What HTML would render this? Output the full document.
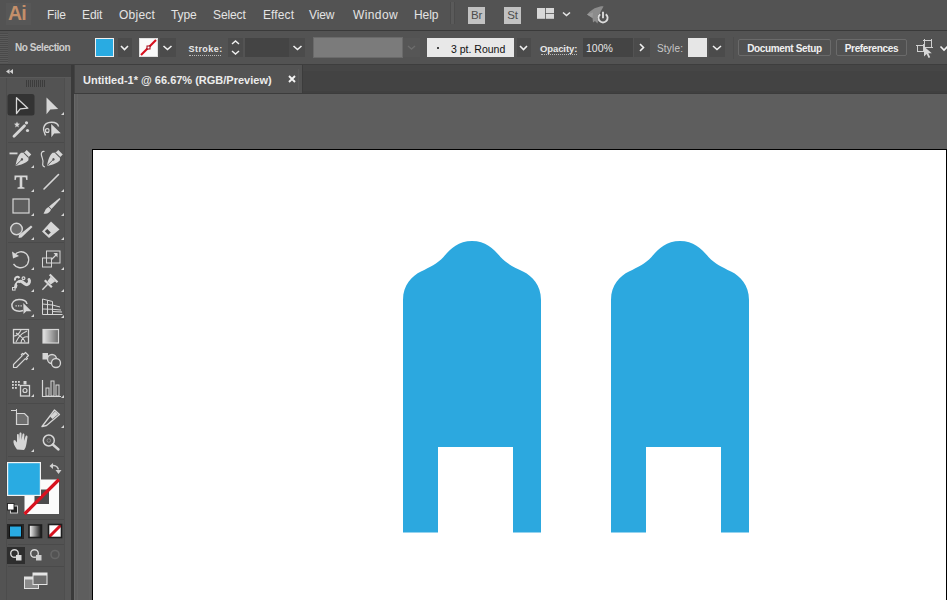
<!DOCTYPE html>
<html><head><meta charset="utf-8">
<style>
*{margin:0;padding:0;box-sizing:border-box}
html,body{width:947px;height:600px;overflow:hidden;background:#535353;font-family:"Liberation Sans",sans-serif;position:relative}
.a{position:absolute}
#menubar{left:0;top:0;width:947px;height:30px;background:#535353}
#menubar .m{position:absolute;top:8px;font-size:12px;color:#e4e4e4;letter-spacing:-0.1px}
#mline{left:0;top:30px;width:947px;height:1px;background:#3a3a3a}
#ctrl{left:0;top:31px;width:947px;height:33px;background:#535353}
#cline{left:0;top:64px;width:947px;height:1px;background:#3e3e3e}
#panel{left:0;top:65px;width:72px;height:535px;background:#535353}
#phead{left:0;top:65px;width:72px;height:12px;background:#474747}
#pborder{left:72px;top:65px;width:2px;height:535px;background:#3c3c3c}
#tabbar{left:74px;top:65px;width:873px;height:28px;background:#434343}
#tab{left:75px;top:65px;width:228px;height:28px;background:#535353;border-right:1px solid #3c3c3c}
#tabline{left:74px;top:93px;width:873px;height:1px;background:#3c3c3c}
#canvas{left:74px;top:94px;width:873px;height:506px;background:#5e5e5e}
#artboard{left:92px;top:149px;width:855px;height:470px;background:#fff;border:1px solid #000}
.btn{border:1px solid #6a6a6a;border-radius:2px;background:#515151;color:#f0f0f0;font-size:10px;font-weight:bold;text-align:center;line-height:17px;letter-spacing:-0.35px}
.lbl{position:absolute;font-size:10px;color:#e6e6e6;font-weight:bold}
</style></head><body>
<div id="menubar" class="a">
  <div class="a" style="left:6px;top:3px;width:25px;height:22px;background:#575757"></div>
  <div class="a" style="left:8px;top:2px;font-size:19.5px;font-weight:bold;color:#c48f6a;letter-spacing:-0.8px">Ai</div>
  <div class="m" style="left:47px">File</div>
  <div class="m" style="left:82px">Edit</div>
  <div class="m" style="left:119px;letter-spacing:0.25px">Object</div>
  <div class="m" style="left:171px">Type</div>
  <div class="m" style="left:213px">Select</div>
  <div class="m" style="left:263px;letter-spacing:0.1px">Effect</div>
  <div class="m" style="left:309px">View</div>
  <div class="m" style="left:353px;letter-spacing:0.4px">Window</div>
  <div class="m" style="left:414px">Help</div>
  <div class="a" style="left:450px;top:2px;width:1px;height:22px;background:#4c4c4c"></div>
  <div class="a" style="left:451px;top:2px;width:3px;height:22px;background:#5a5a5a"></div>
  <div class="a" style="left:454px;top:2px;width:1px;height:22px;background:#4c4c4c"></div>
  <div class="a ico" style="left:468px;top:7px;width:17px;height:16.5px;background:#c2c2c2;color:#4c4c4c;font-size:11.5px;font-weight:normal;line-height:17px;text-align:center;letter-spacing:-0.3px">Br</div>
  <div class="a ico" style="left:504px;top:7px;width:17px;height:16.5px;background:#c2c2c2;color:#4c4c4c;font-size:11.5px;font-weight:normal;line-height:17px;text-align:center;letter-spacing:-0.3px">St</div>
  <svg class="a" style="left:536px;top:6px" width="40" height="16"><rect x="1" y="2" width="8" height="10.8" fill="#d8d8d8"/><rect x="9.8" y="2" width="8.2" height="5.2" fill="#d8d8d8"/><rect x="9.8" y="8" width="8.2" height="4.8" fill="#d8d8d8"/><polyline points="27,6.5 30.5,9.5 34,6.5" fill="none" stroke="#e6e6e6" stroke-width="1.6"/></svg>
  <svg class="a" style="left:580px;top:0px" width="35" height="28"><path d="M7,14.5 C10,11 14,8 17,7.5 C20,6.5 22.5,6 23.5,6.5 C22,9 20.5,12 19,15 L17.5,23.5 L15,21 L13,22.5 L12.5,18 Z" fill="#8c8c8c"/><path d="M7,14.5 L13,12.5 L12.5,18 Z" fill="#9a9a9a"/><circle cx="23" cy="18.3" r="5.8" fill="#535353"/><path d="M20.2,14.2 A4.6,4.6 0 1 0 25.8,14.2" fill="none" stroke="#dcdcdc" stroke-width="1.9"/><line x1="23" y1="11.5" x2="23" y2="18.5" stroke="#535353" stroke-width="3.4"/><line x1="23" y1="11.8" x2="23" y2="18.2" stroke="#e0e0e0" stroke-width="1.8"/></svg>
</div>
<div id="mline" class="a"></div>
<div id="ctrl" class="a">
  <div class="a" style="left:0;top:2px;width:8px;height:30px;background:repeating-linear-gradient(#4a4a4a 0 1px,#5a5a5a 1px 2px)"></div>
  <div class="a" style="left:15px;top:10.5px;font-size:10px;font-weight:bold;color:#cdcdcd;letter-spacing:-0.45px">No Selection</div>
  <div class="a" style="left:95px;top:7px;width:19px;height:19px;background:#29abe2;border:1px solid #f0f0f0"></div>
  <div class="a" style="left:118px;top:7px;width:14px;height:19px;background:#4b4b4b"></div>
  <svg class="a" style="left:118px;top:7px" width="14" height="19"><polyline points="3,8 6.5,11.5 10,8" fill="none" stroke="#f0f0f0" stroke-width="1.6"/></svg>
  <div class="a" style="left:139px;top:7px;width:19px;height:19px;background:#fafafa;border:1px solid #e0e0e0"></div>
  <svg class="a" style="left:139px;top:7px" width="19" height="19"><line x1="2" y1="17" x2="17" y2="2" stroke="#d8101e" stroke-width="2.2"/><rect x="7.5" y="7.5" width="4" height="4" fill="#a00010"/><rect x="8.5" y="8.5" width="2" height="2" fill="#fff"/></svg>
  <div class="a" style="left:160px;top:7px;width:16px;height:19px;background:#4b4b4b"></div>
  <svg class="a" style="left:160px;top:7px" width="16" height="19"><polyline points="3.5,8 7.5,11.5 11.5,8" fill="none" stroke="#f0f0f0" stroke-width="1.6"/></svg>

  <div class="a" style="left:188.5px;top:12.5px;font-size:9px;font-weight:bold;color:#e8e8e8;letter-spacing:0.45px">Stroke:</div>
  <div class="a" style="left:189px;top:23.5px;width:32px;height:1px;border-top:1px dotted #bbb"></div>
  <div class="a" style="left:228px;top:7px;width:15px;height:19px;background:#4b4b4b"></div>
  <svg class="a" style="left:228px;top:7px" width="15" height="19"><polyline points="4,6 7.5,3 11,6" fill="none" stroke="#f0f0f0" stroke-width="1.5"/><polyline points="4,13 7.5,16 11,13" fill="none" stroke="#f0f0f0" stroke-width="1.5"/></svg>
  <div class="a" style="left:245px;top:7px;width:44px;height:19px;background:#444"></div>
  <div class="a" style="left:289px;top:7px;width:16px;height:19px;background:#4b4b4b"></div>
  <svg class="a" style="left:289px;top:7px" width="16" height="19"><polyline points="4.5,8 8.5,11.5 12.5,8" fill="none" stroke="#f0f0f0" stroke-width="1.6"/></svg>
  <div class="a" style="left:313px;top:6px;width:90px;height:21px;background:#7b7b7b;border:1px solid #6a6a6a"></div>
  <div class="a" style="left:403px;top:7px;width:17px;height:19px;background:#565656"></div>
  <svg class="a" style="left:403px;top:7px" width="17" height="19"><polyline points="5,8 8.5,11 12,8" fill="none" stroke="#6c6c6c" stroke-width="1.4"/></svg>

  <div class="a" style="left:427px;top:7px;width:87px;height:19px;background:#e8e8e8"></div>
  <div class="a" style="left:437px;top:15.5px;width:2.2px;height:2.2px;border-radius:50%;background:#111"></div>
  <div class="a" style="left:451px;top:11.5px;font-size:10.5px;color:#111">3 pt. Round</div>
  <div class="a" style="left:517px;top:7px;width:14px;height:19px;background:#4b4b4b"></div>
  <svg class="a" style="left:517px;top:7px" width="14" height="19"><polyline points="3,8 6.5,11.5 10,8" fill="none" stroke="#f0f0f0" stroke-width="1.6"/></svg>

  <div class="a" style="left:540px;top:12px;font-size:9.5px;font-weight:bold;color:#e8e8e8;letter-spacing:-0.1px">Opacity:</div>
  <div class="a" style="left:541px;top:23px;width:36px;height:1px;border-top:1px dotted #bbb"></div>
  <div class="a" style="left:583px;top:7px;width:50px;height:19px;background:#444"></div>
  <div class="a" style="left:586px;top:11px;font-size:10.5px;color:#e6e6e6">100%</div>
  <div class="a" style="left:634px;top:7px;width:16px;height:19px;background:#4b4b4b"></div>
  <svg class="a" style="left:634px;top:7px" width="16" height="19"><polyline points="6,6 9.5,9.5 6,13" fill="none" stroke="#f0f0f0" stroke-width="1.6"/></svg>
  <div class="a" style="left:657px;top:12px;font-size:10px;color:#c8c8c8;letter-spacing:0.2px">Style:</div>
  <div class="a" style="left:688px;top:7px;width:19px;height:19px;background:#e6e6e6"></div>
  <div class="a" style="left:709px;top:7px;width:16px;height:19px;background:#4b4b4b"></div>
  <svg class="a" style="left:709px;top:7px" width="16" height="19"><polyline points="4,8 8,11.5 12,8" fill="none" stroke="#f0f0f0" stroke-width="1.6"/></svg>
  <div class="a" style="left:733px;top:6px;width:1px;height:22px;background:#4d4d4d"></div>

  <div class="a btn" style="left:738px;top:8px;width:93px;height:17px">Document Setup</div>
  <div class="a btn" style="left:836px;top:8px;width:71px;height:17px">Preferences</div>
  <svg class="a" style="left:914px;top:5px" width="33" height="24"><g fill="none" stroke="#cfcfcf" stroke-width="1"><rect x="3.5" y="9.5" width="6" height="6"/><rect x="10.5" y="4.5" width="7" height="7"/><path d="M2,9.5 h1.5 M9.5,8 v1.5 M10.5,3 v1.5 M17.5,11.5 h1.5 M9,4.5 h1.5 M17.5,3 v1.5"/></g><path d="M10,10.5 L10,20.5 L12.6,18 L14.6,22 L16.2,21.2 L14.3,17.3 L17.8,17.3 Z" fill="#d6d6d6"/><polyline points="26.5,10.5 30,14 33.5,10.5" fill="none" stroke="#f0f0f0" stroke-width="1.6"/></svg>
</div>
<div id="cline" class="a"></div>
<div id="panel" class="a"></div>
<div id="phead" class="a"></div>
<div id="pborder" class="a"></div>
<svg class="a" style="left:0;top:0" width="74" height="600">
<g id="pframe">
<rect x="0" y="65" width="72" height="12" fill="#464646"/>
<rect x="0" y="77" width="72" height="1" fill="#5a5a5a"/>
<rect x="6" y="78" width="1" height="522" fill="#4c4c4c"/>
<rect x="64" y="78" width="1" height="522" fill="#4e4e4e"/>
<rect x="65" y="78" width="6" height="522" fill="#575757"/>
<rect x="71" y="65" width="3" height="535" fill="#3a3a3a"/>
<path d="M9.5,69 L6,71.5 L9.5,74 Z M13,69 L9.5,71.5 L13,74 Z" fill="#d0d0d0"/>
<g stroke="#3c3c3c" stroke-width="1">
<line x1="26.5" y1="80" x2="26.5" y2="87"/><line x1="28.5" y1="80" x2="28.5" y2="87"/><line x1="30.5" y1="80" x2="30.5" y2="87"/><line x1="32.5" y1="80" x2="32.5" y2="87"/><line x1="34.5" y1="80" x2="34.5" y2="87"/><line x1="36.5" y1="80" x2="36.5" y2="87"/><line x1="38.5" y1="80" x2="38.5" y2="87"/><line x1="40.5" y1="80" x2="40.5" y2="87"/><line x1="42.5" y1="80" x2="42.5" y2="87"/><line x1="44.5" y1="80" x2="44.5" y2="87"/>
</g>
<g fill="#4a4a4a">
<rect x="8" y="142" width="56" height="1"/>
<rect x="8" y="242" width="56" height="1"/>
<rect x="8" y="319" width="56" height="1"/>
<rect x="8" y="403" width="56" height="1"/>
<rect x="8" y="456" width="56" height="1"/>
<rect x="8" y="519" width="56" height="1"/>
<rect x="8" y="544" width="56" height="1"/>
<rect x="8" y="566" width="56" height="1"/>
</g>
</g>
<g id="tools" fill="#d6d6d6" stroke="#d6d6d6">
<!-- selection -->
<rect x="7.5" y="94" width="27" height="21.5" rx="2.5" fill="#333" stroke="none"/>
<path d="M16.5,97.8 L16.5,113.5 L20.2,108.8 L27.8,108.2 Z" fill="#2a2a2a" stroke="#d8d8d8" stroke-width="1.3" stroke-linejoin="round"/>
<!-- direct selection -->
<path d="M46.5,97.5 L46.5,114.2 L50.3,109.4 L58.2,109 Z" stroke="none"/>
<path d="M61,115 L64,115 L64,112 Z" stroke="none"/>
<!-- magic wand -->
<line x1="14" y1="136.3" x2="24.5" y2="125.8" stroke-width="2.8" stroke-linecap="round"/>
<path d="M17,121.5 L17.8,123.6 L20,123.8 L18.3,125.2 L18.8,127.4 L17,126.2 L15.2,127.4 L15.7,125.2 L14,123.8 L16.2,123.6 Z" stroke="none"/>
<circle cx="26.5" cy="122.8" r="1.6" stroke="none"/><circle cx="27.5" cy="130.5" r="1.6" stroke="none"/>
<!-- lasso -->
<path d="M45.5,135.5 C44.5,133 43,130.5 43.6,128 C44.5,124 48,122.3 51.5,122.3 C55,122.3 58,123.5 58.5,126.5" fill="none" stroke-width="1.4"/>
<circle cx="47.3" cy="130.5" r="1.9" fill="none" stroke-width="1.3"/>
<line x1="50.2" y1="124" x2="50.2" y2="137.5" stroke="#3e3e3e" stroke-width="1"/>
<path d="M51.2,124 L51.4,137.3 L54.2,133.6 L60.8,133.3 Z" stroke="none"/>
<!-- pen -->
<rect x="9.5" y="152.5" width="8" height="1.8" stroke="none"/>
<g transform="translate(22.3,159) rotate(45)"><path d="M-3.2,-9.5 L3.2,-9.5 L3.2,-5.5 L5.2,-3.5 C5.6,0.5 3.2,5 0,9.5 C-3.2,5 -5.6,0.5 -5.2,-3.5 L-3.2,-5.5 Z" stroke="none"/><line x1="0" y1="9" x2="0" y2="1.5" stroke="#535353" stroke-width="0.9"/><circle cx="0" cy="0.5" r="1.2" fill="#535353" stroke="none"/><rect x="-3.2" y="-6" width="6.4" height="0.9" fill="#535353" stroke="none"/></g>
<path d="M31,168 L34,168 L34,165 Z" stroke="none"/>
<!-- curvature pen -->
<path d="M44.5,151.5 C42,151 40.8,153 41.5,155.5 C42.5,159 43.8,161 42.8,163.5 C42.3,165 43,166.5 45,167" fill="none" stroke-width="1.2"/>
<g transform="translate(53.8,159) rotate(45)"><path d="M-3.2,-9.5 L3.2,-9.5 L3.2,-5.5 L5.2,-3.5 C5.6,0.5 3.2,5 0,9.5 C-3.2,5 -5.6,0.5 -5.2,-3.5 L-3.2,-5.5 Z" stroke="none"/><line x1="0" y1="9" x2="0" y2="1.5" stroke="#535353" stroke-width="0.9"/><circle cx="0" cy="0.5" r="1.2" fill="#535353" stroke="none"/><rect x="-3.2" y="-6" width="6.4" height="0.9" fill="#535353" stroke="none"/></g>
<!-- type -->
<path d="M14.5,175.5 L27.5,175.5 L27.5,180 L26.3,180 L25.6,177.3 L22.3,177.3 L22.3,187 L24.5,187.5 L24.5,188.7 L17.5,188.7 L17.5,187.5 L19.7,187 L19.7,177.3 L16.4,177.3 L15.7,180 L14.5,180 Z" stroke="none"/>
<path d="M31,192 L34,192 L34,189 Z" stroke="none"/>
<!-- line -->
<line x1="44" y1="189" x2="58.5" y2="174.5" stroke-width="1.6" stroke-linecap="round"/>
<path d="M61,192 L64,192 L64,189 Z" stroke="none"/>
<!-- rect -->
<rect x="13" y="199" width="16" height="14" fill="#5e5e5e" stroke-width="1.2"/>
<path d="M31,216 L34,216 L34,213 Z" stroke="none"/>
<!-- paintbrush -->
<path d="M59.5,198 L60.5,199 L51.5,209 L49,206.5 Z" stroke="none"/>
<path d="M48.5,207 L51,209.5 C50,212.5 47,214.5 43.5,213.5 C45,212 45,208.5 48.5,207 Z" stroke="none"/>
<path d="M61,216 L64,216 L64,213 Z" stroke="none"/>
<!-- shaper -->
<circle cx="16.5" cy="229" r="5.8" fill="#6a6a6a" stroke-width="1.4"/>
<path d="M31,225.5 L32.5,227 L21.5,237.5 L18.5,238 L19,235 Z" stroke="none"/>
<path d="M31,240 L34,240 L34,237 Z" stroke="none"/>
<!-- eraser -->
<path d="M51,221.5 L59.5,229.5 L49,238 L42,231.5 Z" stroke="none"/>
<path d="M44.8,231.3 L47.3,229 L50.8,232.5 L48.3,234.8 Z" fill="#4a4a4a" stroke="none"/>
<path d="M61,240 L64,240 L64,237 Z" stroke="none"/>
<!-- rotate -->
<path d="M14.5,255.5 C17,251.5 22.5,250.5 26,253.5 C30,257 29.5,263.5 25,266.5 C21,269 16,267.5 13.5,264" fill="none" stroke-width="1.3"/>
<path d="M12,251.5 L13,258.5 L19,256 Z" stroke="none"/>
<path d="M31,270 L34,270 L34,267 Z" stroke="none"/>
<!-- scale -->
<rect x="42.5" y="258" width="9" height="9" fill="none" stroke-width="1"/>
<rect x="46.5" y="251" width="13.5" height="12" fill="none" stroke-width="1"/>
<line x1="51" y1="260" x2="57" y2="254" stroke-width="1.2"/>
<path d="M57.5,253 L57.5,257.5 L53.5,253 Z" stroke="none"/>
<path d="M61,270 L64,270 L64,267 Z" stroke="none"/>
<!-- width / warp -->
<path d="M15.5,287 C16,283.5 18.5,280.5 21.5,281.5 C24,282.5 25.5,285.5 27.5,284.5 C29.5,283.5 30,281 29,279.5" fill="none" stroke-width="3" stroke-linecap="round"/>
<circle cx="18.2" cy="284" r="1.3" fill="#535353" stroke="none"/>
<path d="M15,280.5 C14.5,277 17.5,275.8 19.5,278" fill="none" stroke-width="2"/>
<circle cx="23.5" cy="278.3" r="1.4" fill="none" stroke-width="1.2"/>
<rect x="12.5" y="287.5" width="2.6" height="2.6" fill="none" stroke-width="1"/>
<path d="M31,292 L34,292 L34,289 Z" stroke="none"/>
<!-- puppet warp pin -->
<g transform="translate(50.5,281.5) rotate(45)" stroke="none"><rect x="-5.5" y="-5.5" width="11" height="2.2"/><path d="M-3.2,-3.5 L3.2,-3.5 L2.4,2 L-2.4,2 Z"/><rect x="-5" y="2" width="10" height="2.2"/><rect x="-0.7" y="4" width="1.4" height="7.5"/></g>
<path d="M61,292 L64,292 L64,289 Z" stroke="none"/>
<!-- shape builder -->
<path d="M23,310.5 C19,312 13,311 12,306.5 C11.2,302.5 14.5,299.5 19,299.5 C23,299.5 26.5,301 27,304" fill="none" stroke-width="1.4"/>
<path d="M15.5,305.8 h1.3 M18,305.8 h1.3 M20.5,305.8 h1.3" stroke-width="1.3"/>
<path d="M23.3,303 L23.5,314 L26.3,311.3 L31.5,311.3 Z" stroke="none"/>
<path d="M31,317 L34,317 L34,314 Z" stroke="none"/>
<!-- perspective grid -->
<path d="M42.5,299 L42.5,314.5 L62.5,314.5 M42.5,299 L52.5,301.5 L52.5,314.5 M47.5,300.2 L47.5,314.5 M42.5,304 L52.5,305 M42.5,309 L52.5,309.3 M52.5,311.5 L62,312 M52.5,305 L60,307 M52.5,309.3 L61,310" fill="none" stroke-width="1"/>
<path d="M61,318 L64,318 L64,315 Z" stroke="none"/>
<!-- mesh -->
<rect x="13.5" y="329.5" width="15" height="13.5" fill="none" stroke-width="1.3"/>
<path d="M16,342 C18,338 20,334 27,331 M14,336 C18,336 20,332 21,330 M21,343 C21,339 24,336 28.5,337 M16,333 C20,336 24,338 25,342" fill="none" stroke-width="1.1"/>
<!-- gradient -->
<defs><linearGradient id="gr1" x1="0" x2="1" y1="0" y2="0"><stop offset="0" stop-color="#e6e6e6"/><stop offset="1" stop-color="#6a6a6a"/></linearGradient>
<linearGradient id="gr2" x1="0" x2="1" y1="0" y2="0"><stop offset="0" stop-color="#fff"/><stop offset="1" stop-color="#111"/></linearGradient></defs>
<rect x="43" y="329.5" width="15.5" height="13.5" fill="url(#gr1)" stroke-width="1.2"/>
<!-- eyedropper -->
<path d="M25.5,352.5 L28.5,355.5 L26.5,357.5 L27.5,358.5 L26.3,359.7 L25.3,358.7 L16.5,367.5 L13.5,367.5 L13.5,364.5 L22.3,355.7 L21.3,354.7 L22.5,353.5 L23.5,354.5 Z" fill="none" stroke-width="1.2" stroke-linejoin="round"/>
<path d="M31,370 L34,370 L34,367 Z" stroke="none"/>
<!-- blend -->
<rect x="42.5" y="353" width="5.5" height="6.5" stroke="none"/>
<circle cx="52" cy="359" r="4.5" fill="#707070" stroke-width="1.3"/>
<circle cx="56" cy="363" r="4.5" fill="#535353" stroke-width="1.3"/>
<!-- symbol sprayer -->
<g stroke="none"><rect x="12" y="381" width="1.8" height="1.8"/><rect x="15" y="381" width="1.8" height="1.8"/><rect x="18" y="381" width="1.8" height="1.8"/><rect x="12" y="384" width="1.8" height="1.8"/><rect x="15" y="384" width="1.8" height="1.8"/><rect x="18" y="384" width="1.8" height="1.8"/><rect x="12" y="387" width="1.8" height="1.8"/><rect x="15" y="387" width="1.8" height="1.8"/>
<rect x="23.5" y="381" width="3" height="3.5"/></g>
<rect x="20.5" y="385.5" width="9" height="10.5" fill="none" stroke-width="1.3"/>
<circle cx="25" cy="390.5" r="2" fill="none" stroke-width="1.2"/>
<path d="M31,397 L34,397 L34,394 Z" stroke="none"/>
<!-- graph -->
<path d="M42.5,380 L42.5,396.5 L61,396.5" fill="none" stroke-width="1.2"/>
<rect x="46" y="388" width="3" height="8" fill="none" stroke-width="1"/>
<rect x="51" y="381" width="3" height="15" fill="none" stroke-width="1"/>
<rect x="56" y="385" width="3" height="11" fill="none" stroke-width="1"/>
<path d="M61,398 L64,398 L64,395 Z" stroke="none"/>
<!-- artboard -->
<path d="M11,410.5 L16,410.5 M16.5,409 L16.5,413" fill="none" stroke-width="1"/>
<path d="M16.5,413.5 L24.5,413.5 L28,417 L28,424.5 L16.5,424.5 Z" fill="#6e6e6e" stroke-width="1.2"/>
<!-- slice -->
<path d="M54.5,410 L59.5,414.5 L46.5,425.5 L42,426.5 Z" fill="none" stroke-width="1.3" stroke-linejoin="round"/>
<path d="M55,411.5 L58,414.3 L52.5,419 L50,416.5 Z" stroke="none"/>
<path d="M61,428 L64,428 L64,425 Z" stroke="none"/>
<!-- hand -->
<path d="M17,449.5 C14.5,446 13,443 13.5,440.5 L15,440 L17,442.5 L17,435 C17,433.5 18.8,433.5 18.8,435 L19,440 L19.5,433.5 C19.5,432 21.5,432 21.5,433.5 L21.5,440 L22.5,434.5 C22.6,433 24.4,433 24.4,434.5 L24,441 L25.5,436.5 C25.8,435 27.7,435.3 27.5,437 L26.5,443.5 C26,447 25,449 24,450 Z" stroke="none"/>
<path d="M31,452 L34,452 L34,449 Z" stroke="none"/>
<!-- zoom -->
<circle cx="48.8" cy="440.5" r="5.5" fill="none" stroke-width="1.5"/>
<line x1="52.8" y1="444.5" x2="58.5" y2="449.5" stroke-width="2.4" stroke-linecap="round"/>
<circle cx="48.8" cy="440.5" r="1.8" fill="none" stroke-width="0.8" opacity="0.5"/>
</g>
<g id="colors">
<!-- stroke swatch -->
<rect x="24.5" y="479.5" width="34.5" height="34.5" fill="#fbfbfb"/>
<rect x="34.5" y="489.5" width="14.5" height="14.5" fill="#4c4c4c"/>
<line x1="24.5" y1="514" x2="59" y2="479.5" stroke="#d8121f" stroke-width="3.2"/>
<!-- fill swatch -->
<rect x="7" y="462" width="34" height="34" fill="#f2f2f2"/>
<rect x="8.2" y="463.2" width="31.6" height="31.6" fill="#29abe2"/>
<!-- swap -->
<path d="M51,466 C54,465 57.5,465.5 58.5,469.5" fill="none" stroke="#d0d0d0" stroke-width="1.4"/>
<path d="M49.5,466 L53,463 L53,469 Z M58.5,474 L55.5,470 L61.5,470 Z" fill="#d0d0d0"/>
<!-- default -->
<rect x="10.5" y="506" width="7" height="7" fill="#222" stroke="#ddd" stroke-width="0.9"/>
<rect x="7.5" y="503.5" width="6.5" height="6.5" fill="#fff" stroke="#222" stroke-width="0.9"/>
<!-- mode buttons -->
<rect x="7" y="524" width="17" height="15" fill="#262626"/>
<rect x="9.5" y="526" width="12" height="11" fill="#29abe2" stroke="#111" stroke-width="1"/>
<rect x="29" y="525" width="12.5" height="12.5" fill="url(#gr2)" stroke="#1e1e1e" stroke-width="1.6"/>
<rect x="48.5" y="524.5" width="13" height="13" fill="#fff"/>
<line x1="49" y1="537" x2="61" y2="525" stroke="#d8121f" stroke-width="3"/>
<rect x="48.5" y="524.5" width="13" height="13" fill="none" stroke="#1e1e1e" stroke-width="1.6"/>
<!-- draw modes -->
<rect x="7" y="547" width="18" height="17" fill="#2e2e2e"/>
<g fill="none" stroke="#d6d6d6" stroke-width="1.4">
<circle cx="14.5" cy="553.5" r="3.8"/>
<circle cx="34.5" cy="553.5" r="3.8"/>
</g>
<rect x="16" y="555" width="5.5" height="5.5" fill="#dcdcdc"/>
<rect x="36" y="555" width="5.5" height="5.5" fill="#cfcfcf"/>
<circle cx="55" cy="554.5" r="4" fill="none" stroke="#666" stroke-width="1.6"/>
<!-- screen mode -->
<rect x="24.5" y="577" width="14" height="11.5" fill="#8a8a8a" stroke="#e0e0e0" stroke-width="1"/>
<rect x="24.5" y="577" width="14" height="2.5" fill="#e0e0e0"/>
<rect x="33" y="573" width="14" height="11.5" fill="#6e6e6e" stroke="#e6e6e6" stroke-width="1"/>
<rect x="33" y="573" width="14" height="2.5" fill="#e6e6e6"/>
</g>
</svg>

<div id="tabbar" class="a"></div>
<div id="tab" class="a"><div class="a" style="left:8px;top:9px;font-size:11px;font-weight:bold;color:#ececec">Untitled-1* @ 66.67% (RGB/Preview)</div>
<svg class="a" style="left:213px;top:10px" width="8" height="8"><path d="M1,1 L7,7 M7,1 L1,7" stroke="#f4f4f4" stroke-width="1.9"/></svg>
<div class="a" style="left:223px;top:4px;width:1px;height:21px;background:#5a5a5a"></div></div>
<div class="a" style="left:303px;top:65px;width:644px;height:6px;background:#464646"></div>
<div id="tabline" class="a"></div>
<div class="a" style="left:303px;top:91px;width:644px;height:2px;background:#404040"></div>
<div id="canvas" class="a"></div>
<div class="a" style="left:74px;top:94px;width:1px;height:506px;background:#686868"></div><div class="a" style="left:77px;top:94px;width:1px;height:506px;background:#636363"></div><div class="a" style="left:89px;top:150px;width:3px;height:450px;background:#616161"></div>
<div id="artboard" class="a"></div>
<svg class="a" style="left:0;top:0" width="947" height="600">
<path fill="#2ca8df" d="M403,532.5 L403,300 C403,285 412,276 421,271.6 C430,267 437,264 443.5,257 C450,249 458,241 472,241 C486,241 494,249 500.5,257 C507,264 514,267 523,271.6 C532,276 541,285 541,300 L541,532.5 L513,532.5 L513,447 L438,447 L438,532.5 Z"/>
<path fill="#2ca8df" transform="translate(208,0)" d="M403,532.5 L403,300 C403,285 412,276 421,271.6 C430,267 437,264 443.5,257 C450,249 458,241 472,241 C486,241 494,249 500.5,257 C507,264 514,267 523,271.6 C532,276 541,285 541,300 L541,532.5 L513,532.5 L513,447 L438,447 L438,532.5 Z"/>
</svg>
</body></html>
